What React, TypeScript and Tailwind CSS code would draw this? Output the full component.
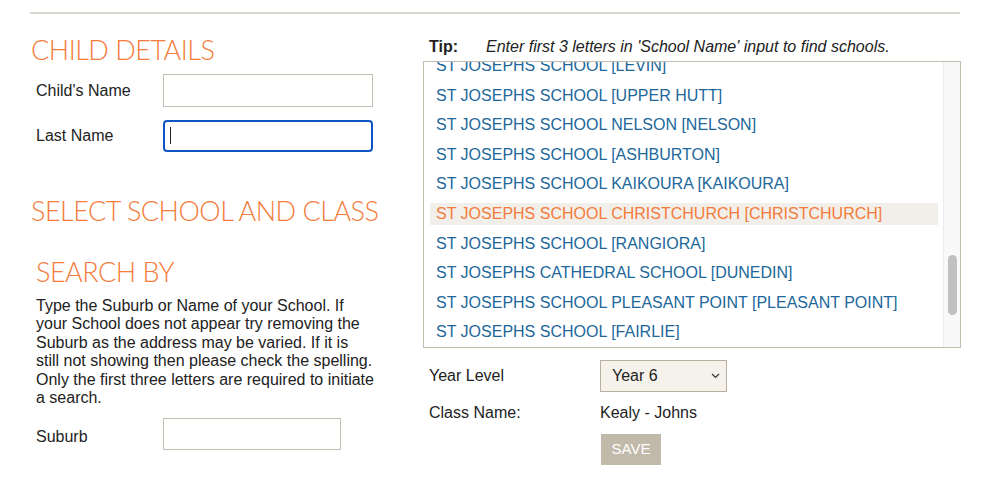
import React from "react";

// Lista de escuelas visibles en el buscador
const schools = [
  "ST JOSEPHS SCHOOL [LEVIN]",
  "ST JOSEPHS SCHOOL [UPPER HUTT]",
  "ST JOSEPHS SCHOOL NELSON [NELSON]",
  "ST JOSEPHS SCHOOL [ASHBURTON]",
  "ST JOSEPHS SCHOOL KAIKOURA [KAIKOURA]",
  "ST JOSEPHS SCHOOL CHRISTCHURCH [CHRISTCHURCH]",
  "ST JOSEPHS SCHOOL [RANGIORA]",
  "ST JOSEPHS CATHEDRAL SCHOOL [DUNEDIN]",
  "ST JOSEPHS SCHOOL PLEASANT POINT [PLEASANT POINT]",
  "ST JOSEPHS SCHOOL [FAIRLIE]",
];

const heading =
  "text-[27px] leading-[32px] tracking-[-0.5px] font-light text-[#f47b3a] font-['Lato',sans-serif] uppercase";

function FieldRow({
  label,
  className,
  labelClass = "",
  input,
}: {
  label: string;
  className: string;
  labelClass?: string;
  input: React.ReactNode;
}) {
  return (
    <div className={`flex items-center ${className}`}>
      <label className={`w-[133px] pl-[6px] text-[16px] text-[#222] ${labelClass}`}>{label}</label>
      {input}
    </div>
  );
}

export default function App() {
  return (
    <div className="w-[1000px] h-[481px] bg-white font-['Liberation_Sans',Arial,sans-serif] text-[#222] overflow-hidden">
      <div className="ml-[30px] w-[931px]">
        <div className="mt-[12px] h-[2px] w-[930px] bg-[#d9d5ce]" />

        <div className="flex">
          {/* Columna izquierda */}
          <div className="w-[393px]">
            <h2 className={`${heading} mt-[20px] pl-px`}>Child Details</h2>

            <FieldRow
              label="Child's Name"
              className="mt-[8px] h-[33px]"
              input={
                <input
                  type="text"
                  className="w-[210px] h-[33px] border border-[#c5bfb3] bg-white px-2 outline-none"
                />
              }
            />
            <FieldRow
              label="Last Name"
              className="mt-[13px] h-[32px]"
              input={
                <div className="relative">
                  <input
                    type="text"
                    className="w-[210px] h-[32px] border-2 border-[#0f56c4] rounded-[4px] bg-white px-[5px] outline-none"
                  />
                  <span className="pointer-events-none absolute left-[7px] top-[7px] w-px h-[17px] bg-[#222]" />
                </div>
              }
            />

            <h2 className={`${heading} mt-[43px] pl-px`}>Select School and Class</h2>

            <h3 className={`${heading} mt-[29px] pl-[6px]`}>Search By</h3>

            <p className="mt-[9px] ml-[6px] w-[339px] text-[16px] leading-[18.4px]">
              Type the Suburb or Name of your School. If your School does not appear try
              removing the Suburb as the address may be varied. If it is still not showing
              then please check the spelling. Only the first three letters are required to
              initiate a search.
            </p>

            <FieldRow
              label="Suburb"
              className="mt-[11px] h-[32px]"
              labelClass="pt-[6px]"
              input={
                <input
                  type="text"
                  className="w-[178px] h-[32px] border border-[#c5bfb3] bg-white px-2 outline-none"
                />
              }
            />
          </div>

          {/* Columna derecha */}
          <div className="w-[538px]">
            <div className="mt-[24px] flex pl-[6px] text-[16px] leading-[18px]">
              <span className="w-[57px] font-bold">Tip:</span>
              <span className="italic">Enter first 3 letters in 'School Name' input to find schools.</span>
            </div>

            <div className="mt-[5px] h-[287px] border border-[#c3bcaf] flex">
              <div className="flex-1 overflow-hidden pl-[6px] pr-[5px]">
                <ul className="-mt-[7px] flex flex-col gap-[7.6px]">
                  {schools.map((s) => {
                    const active = s.includes("CHRISTCHURCH");
                    return (
                      <li
                        key={s}
                        className={`h-[22px] leading-[22px] px-[6px] text-[16px] whitespace-nowrap ${
                          active ? "bg-[#f2efea] text-[#f47b3a]" : "text-[#21679a]"
                        }`}
                      >
                        {s}
                      </li>
                    );
                  })}
                </ul>
              </div>
              <div className="w-[17px] bg-[#f9f9f9] border-l border-[#ececec]">
                <div className="mt-[193px] ml-[4px] w-[9px] h-[60px] rounded-full bg-[#c1c1c1]" />
              </div>
            </div>

            <div className="mt-[12px] flex items-center h-[32px] text-[16px]">
              <span className="w-[177px] pl-[6px]">Year Level</span>
              <div className="relative w-[127px] h-[32px]">
                <select
                  defaultValue="Year 6"
                  className="appearance-none w-full h-full border border-[#b9af9e] bg-[#f5f2eb] pl-[11px] text-[16px] outline-none"
                >
                  <option>Year 5</option>
                  <option>Year 6</option>
                  <option>Year 7</option>
                </select>
                <svg
                  className="pointer-events-none absolute right-[7px] top-[13px]"
                  width="9"
                  height="6"
                  viewBox="0 0 9 6"
                  fill="none"
                >
                  <path d="M1 1l3.5 3.5L8 1" stroke="#333" strokeWidth="1.2" />
                </svg>
              </div>
            </div>

            <div className="mt-[11px] flex items-center h-[20px] text-[16px]">
              <span className="w-[177px] pl-[6px]">Class Name:</span>
              <span>Kealy - Johns</span>
            </div>

            <button className="mt-[11px] ml-[178px] w-[60px] h-[31px] bg-[#c1baab] text-white text-[15px]">
              SAVE
            </button>
          </div>
        </div>
      </div>
    </div>
  );
}
